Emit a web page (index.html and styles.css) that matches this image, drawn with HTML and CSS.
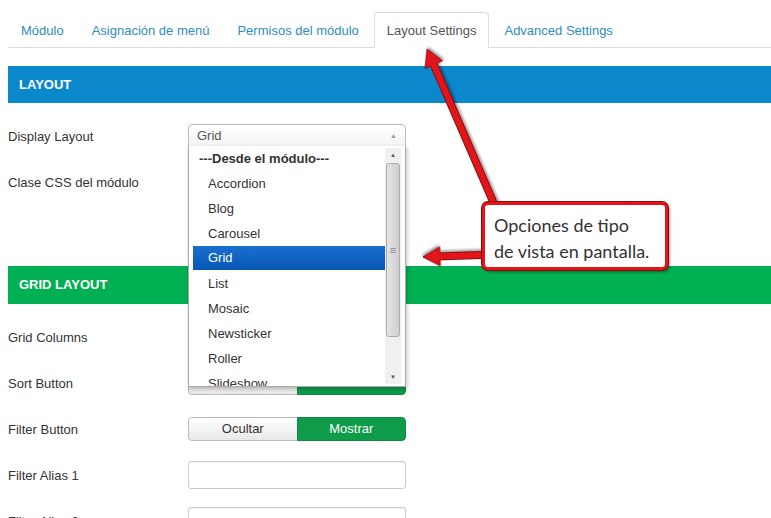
FILE: index.html
```html
<!DOCTYPE html>
<html lang="es">
<head>
    <meta charset="UTF-8">
    <title>Layout Settings</title>
    <link rel="stylesheet" href="styles.css">
</head>
<body>
<div class="page">

    <ul class="tabs">
        <li><a href="#">Módulo</a></li>
        <li><a href="#">Asignación de menú</a></li>
        <li><a href="#">Permisos del módulo</a></li>
        <li class="active"><a href="#">Layout Settings</a></li>
        <li><a href="#">Advanced Settings</a></li>
    </ul>

    <div class="section-head blue">LAYOUT</div>
    <div class="rows">
        <div class="row">
            <label>Display Layout</label>
            <div class="control select-wrap">
                <div class="select">Grid <span class="caret">&#9650;</span></div>
                <div class="dropdown">
                    <ul class="options">
                        <li class="group">---Desde el módulo---</li>
                        <li>Accordion</li>
                        <li>Blog</li>
                        <li>Carousel</li>
                        <li class="selected">Grid</li>
                        <li>List</li>
                        <li>Mosaic</li>
                        <li>Newsticker</li>
                        <li>Roller</li>
                        <li>Slideshow</li>
                    </ul>
                    <div class="scrollbar">
                        <span class="sb-btn">&#9650;</span>
                        <span class="sb-thumb"><span class="grip">&#8801;</span></span>
                        <span class="sb-btn down">&#9660;</span>
                    </div>
                </div>
            </div>
        </div>
        <div class="row">
            <label>Clase CSS del módulo</label>
            <div class="control"><input type="text" class="text-input"></div>
        </div>
    </div>

    <div class="section-head green">GRID LAYOUT</div>
    <div class="rows">
        <div class="row">
            <label>Grid Columns</label>
            <div class="control"><input type="text" class="text-input"></div>
        </div>
        <div class="row">
            <label>Sort Button</label>
            <div class="control">
                <div class="toggle"><span class="off">Ocultar</span><span class="on">Mostrar</span></div>
            </div>
        </div>
        <div class="row">
            <label>Filter Button</label>
            <div class="control">
                <div class="toggle"><span class="off">Ocultar</span><span class="on">Mostrar</span></div>
            </div>
        </div>
        <div class="row">
            <label>Filter Alias 1</label>
            <div class="control"><input type="text" class="text-input"></div>
        </div>
        <div class="row">
            <label>Filter Alias 2</label>
            <div class="control"><input type="text" class="text-input"></div>
        </div>
    </div>

    <!-- annotation over the screenshot -->
    <svg class="arrows" width="771" height="518" viewBox="0 0 771 518">
        <g transform="translate(427 49) rotate(-113.4)">
            <polygon class="arrow" points="-172,-3.5 -17,-3.5 -17,-9.5 0,0 -17,9.5 -17,3.5 -172,3.5"/>
        </g>
        <g transform="translate(423 257) rotate(178)">
            <polygon class="arrow" points="-62,-3.5 -17,-3.5 -17,-9.5 0,0 -17,9.5 -17,3.5 -62,3.5"/>
        </g>
    </svg>
    <div class="callout">Opciones de tipo<br>de vista en pantalla.</div>

</div>
</body>
</html>
```

FILE: styles.css
```css
body {
    margin: 0;
    background: #fff;
    font-family: "Liberation Sans", Arial, sans-serif;
    font-size: 13px;
    color: #333;
}

.page {
    position: relative;
    width: 771px;
    height: 518px;
    overflow: hidden;
    padding-left: 8px;
    box-sizing: border-box;
}

.tabs {
    list-style: none;
    margin: 12px 0 0;
    padding: 0;
    display: flex;
    border-bottom: 1px solid #ddd;
    height: 35px;
}

.tabs li {
    margin-right: 2px;
}

.tabs a {
    display: block;
    height: 35px;
    line-height: 35px;
    padding: 0 12px;
    color: #2f8dc0;
    text-decoration: none;
    border: 1px solid transparent;
    border-bottom: none;
    box-sizing: border-box;
}

.tabs .active a {
    color: #555;
    background: #fff;
    border-color: #ddd;
    border-radius: 4px 4px 0 0;
    height: 36px;
}

.section-head {
    color: #fff;
    font-weight: bold;
    padding-left: 11px;
}

.section-head.blue {
    background: #0a88cb;
    height: 37px;
    line-height: 37px;
    margin-top: 18px;
}

.section-head.green {
    background: #00b052;
    height: 38px;
    line-height: 38px;
    margin-top: 61px;
}

.rows {
    margin-top: 10px;
}

.row {
    display: flex;
    align-items: center;
    height: 46px;
}

.row label {
    width: 180px;
}

.control {
    width: 218px;
}

.select-wrap {
    position: relative;
}

.select {
    height: 24px;
    line-height: 22px;
    box-sizing: border-box;
    border: 1px solid #bbb;
    border-radius: 4px 4px 0 0;
    background: linear-gradient(#fff, #f3f3f3);
    padding-left: 8px;
    color: #555;
    position: relative;
}

.caret {
    position: absolute;
    right: 8px;
    top: 0;
    font-size: 7px;
    color: #999;
}

.dropdown {
    position: absolute;
    top: 22px;
    left: 0;
    width: 218px;
    height: 241px;
    box-sizing: border-box;
    border: 1px solid #aaa;
    border-top: none;
    background: #fff;
    box-shadow: 1px 2px 4px rgba(0, 0, 0, 0.25);
    z-index: 5;
    overflow: hidden;
    display: flex;
    padding: 0 4px 0 4px;
}

.options {
    list-style: none;
    margin: 0;
    padding: 0;
    flex: 1;
}

.options li {
    height: 25px;
    line-height: 25px;
    padding-left: 15px;
    color: #333;
}

.options li.group {
    padding-left: 6px;
    font-weight: bold;
}

.options li.selected {
    height: 24px;
    line-height: 24px;
    margin-bottom: 1px;
    color: #fff;
    background: linear-gradient(#1a6fd0, #0656b3);
}

.scrollbar {
    width: 16px;
    margin: 2px 0;
    display: flex;
    flex-direction: column;
    background: #f0f0f0;
}

.sb-btn {
    height: 14px;
    font-size: 6px;
    line-height: 14px;
    text-align: center;
    color: #555;
}

.sb-btn.down {
    margin-top: auto;
}

.sb-thumb {
    height: 172px;
    margin: 1px 1px 0;
    border: 1px solid #aaa;
    border-radius: 3px;
    background: linear-gradient(90deg, #e4e4e4, #cfcfcf);
    display: flex;
    align-items: center;
    justify-content: center;
}

.grip {
    font-size: 11px;
    color: #888;
}

.text-input {
    display: block;
    width: 218px;
    height: 28px;
    box-sizing: border-box;
    border: 1px solid #ccc;
    border-radius: 3px;
    box-shadow: inset 0 1px 1px rgba(0, 0, 0, 0.06);
}

.toggle {
    display: flex;
    height: 24px;
    line-height: 22px;
    border-radius: 4px;
    overflow: hidden;
    text-align: center;
}

.toggle span {
    flex: 1;
    box-sizing: border-box;
}

.toggle .off {
    border: 1px solid #bbb;
    border-right: none;
    border-radius: 4px 0 0 4px;
    background: linear-gradient(#fff, #e8e8e8);
    color: #333;
}

.toggle .on {
    background: #0e9c4a;
    border: 1px solid #0b8a40;
    border-radius: 0 4px 4px 0;
    color: #fff;
}

.arrows {
    position: absolute;
    top: 0;
    left: 0;
    z-index: 8;
    pointer-events: none;
}

.arrow {
    fill: #e3151a;
    stroke: #8c0b0b;
    stroke-width: 1;
    filter: drop-shadow(1px 2px 1px rgba(0, 0, 0, 0.35));
}

.callout {
    position: absolute;
    left: 482px;
    top: 202px;
    width: 186px;
    height: 68px;
    box-sizing: border-box;
    border: 3px solid #e3151a;
    border-radius: 6px;
    background: #fff;
    box-shadow: 0 0 0 1px #8c0b0b, 2px 2px 3px rgba(0, 0, 0, 0.4);
    padding: 7px 0 0 9px;
    font-family: Lato, "Open Sans", sans-serif;
    font-size: 18px;
    line-height: 26px;
    color: #333;
    z-index: 9;
}
```
